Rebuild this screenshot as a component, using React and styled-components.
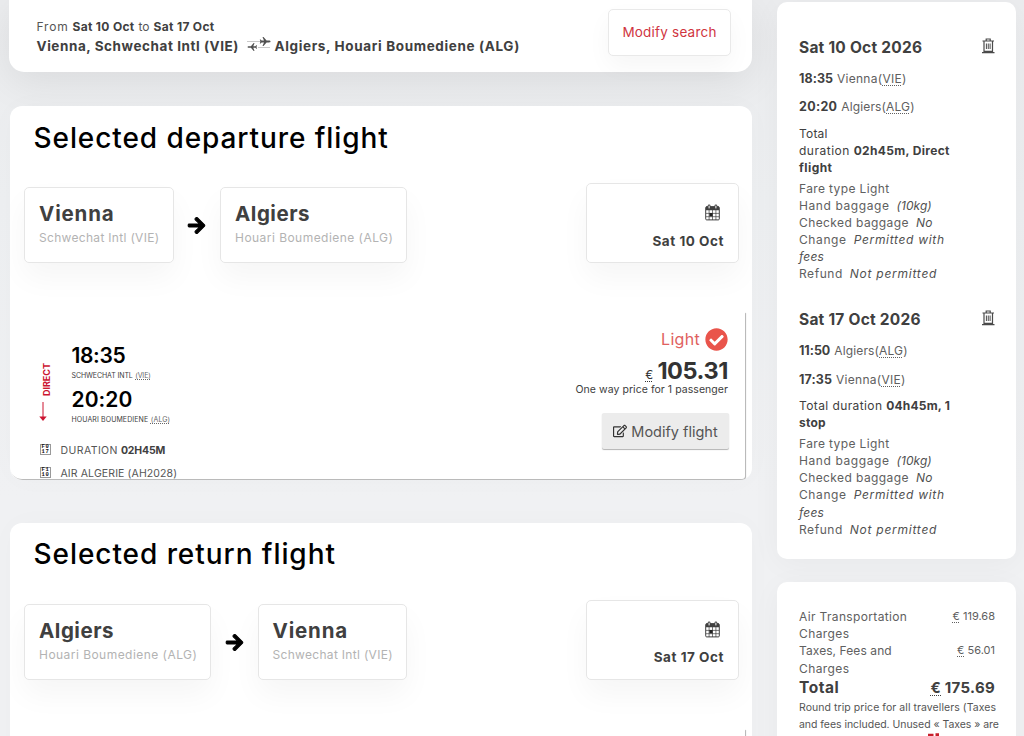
import React from 'react';
import styled, { createGlobalStyle } from 'styled-components';
import { FaArrowRight, FaCheckCircle, FaRegEdit } from 'react-icons/fa';

const GlobalStyle = createGlobalStyle`
	* {
		box-sizing: border-box;
	}
	body {
		margin: 0;
		height: 736px;
		overflow: hidden;
		background: linear-gradient(180deg, #ebecee 0, #edeff1 200px, #f0f1f3 500px);
		font-family: Inter, 'Liberation Sans', sans-serif;
		color: #404040;
	}
	abbr {
		text-decoration: underline dotted 1px;
		text-underline-offset: 2px;
	}
`;

const Page = styled.div`
	display: flex;
	height: 736px;
	overflow: hidden;
`;

const Main = styled.main`
	width: 742px;
	margin-left: 10px;
	flex: none;
`;

const SearchBar = styled.header`
	display: flex;
	justify-content: space-between;
	align-items: flex-start;
	height: 72px;
	margin-left: -1px;
	padding: 9px 21px 0 27.5px;
	background: #fff;
	border-radius: 0 0 15px 15px;
	box-shadow: 0 10px 40px rgba(0, 0, 0, 0.08);
`;

const SearchInfo = styled.div`
	padding-top: 9px;
`;

const Dates = styled.div`
	display: flex;
	gap: 4px;
	font-size: 12px;
	line-height: 18px;
	letter-spacing: 0.32px;
	white-space: nowrap;
	color: #555;
	b {
		color: #404040;
	}
`;

const Route = styled.div`
	display: flex;
	align-items: center;
	font-size: 13.5px;
	font-weight: 700;
	line-height: 20px;
	white-space: nowrap;
	svg {
		margin: -4px 3.5px 0 8px;
	}
`;

const Label = styled.span`
	letter-spacing: ${(props) => props.$ls || 0}px;
	white-space: nowrap;
`;

const SearchButton = styled.button`
	width: 123px;
	height: 47px;
	padding: 0 0 1px;
	border: 1px solid #e9e9e9;
	border-radius: 5px;
	background: #fff;
	box-shadow: 0 10px 25px rgba(0, 0, 0, 0.04);
	font: 400 13.5px Inter, sans-serif;
	letter-spacing: 0.21px;
	color: #d0353f;
`;

const FlightCard = styled.section`
	height: 374px;
	margin-top: ${(props) => props.$gap}px;
	background: #fff;
	border-radius: 12px;
	overflow: hidden;
	box-shadow: 0 0 30px rgba(0, 0, 0, 0.02);
`;

const Title = styled.h2`
	margin: 0;
	padding: 12.5px 0 0 23.5px;
	font-size: 28px;
	font-weight: 500;
	line-height: 39.5px;
	letter-spacing: ${(props) => props.$ls}px;
	color: #000;
`;

const Cities = styled.div`
	display: flex;
	align-items: flex-end;
	height: 80px;
	margin: 25px 13px 0 14px;
`;

const CityBox = styled.div`
	width: ${(props) => props.$width}px;
	height: 76px;
	padding: 13px 0 0 14px;
	border: 1px solid #e6e6e6;
	border-radius: 5px;
	background: #fff;
	box-shadow: 0 15px 30px rgba(0, 0, 0, 0.04);
`;

const CityName = styled.div`
	font-size: 20.5px;
	font-weight: 700;
	line-height: 25px;
	letter-spacing: ${(props) => props.$ls}px;
`;

const Airport = styled.div`
	font-size: 12px;
	line-height: 24px;
	letter-spacing: ${(props) => props.$ls}px;
	white-space: nowrap;
	color: #b3b3b3;
`;

const ArrowCell = styled.div`
	display: flex;
	align-items: center;
	justify-content: center;
	width: 46.5px;
	height: 76px;
	padding-top: 1px;
	color: #000;
	svg {
		stroke: #000;
		stroke-width: 28px;
		overflow: visible;
	}
`;

const DateBox = styled.div`
	display: flex;
	flex-direction: column;
	align-items: flex-end;
	width: 153px;
	height: 80px;
	margin-left: auto;
	padding: 20px 14px 0 0;
	border: 1px solid #e6e6e6;
	border-radius: 5px;
	background: #fff;
	box-shadow: 0 15px 30px rgba(0, 0, 0, 0.04);
	font-size: 13.5px;
	font-weight: 700;
	line-height: 20px;
	letter-spacing: 0.53px;
	svg {
		display: block;
		margin: 0 4px 9.5px 0;
	}
`;

const Flight = styled.div`
	display: flex;
	justify-content: space-between;
	width: 735px;
	height: 167px;
	margin-top: 49px;
	padding-right: 17px;
	border-radius: 0 0 3px 12px;
	box-shadow: 1px 1px 1px rgba(0, 0, 0, 0.3);
`;

const Itinerary = styled.div`
	padding: 31px 0 0 29px;
`;

const Schedule = styled.div`
	display: flex;
	margin-bottom: 8px;
`;

const Direct = styled.div`
	display: flex;
	flex-direction: column;
	align-items: center;
	width: 15px;
	margin-right: 17.5px;
	padding-top: 20px;
	color: #cc1430;
	span {
		align-self: flex-end;
		writing-mode: vertical-rl;
		transform: rotate(180deg);
		font-size: 9px;
		font-weight: 700;
		line-height: 14px;
	}
	svg {
		margin: 6px 7px 0 0;
	}
`;

const Time = styled.div`
	font-size: 21px;
	font-weight: 600;
	line-height: 25px;
	letter-spacing: ${(props) => props.$ls}px;
	color: #000;
`;

const Station = styled.div`
	display: flex;
	gap: ${(props) => props.$gap}px;
	font-size: 7px;
	line-height: 15px;
	margin-bottom: 4px;
	letter-spacing: ${(props) => props.$ls}px;
	white-space: nowrap;
	abbr {
		color: #666;
		text-underline-offset: 1px;
	}
`;

const Detail = styled.div`
	display: flex;
	align-items: center;
	height: 23px;
	margin-left: 1px;
	font-size: 10.5px;
	letter-spacing: ${(props) => props.$ls}px;
	color: #555;
	white-space: nowrap;
	b {
		margin-left: 3px;
		letter-spacing: -0.13px;
		color: #404040;
	}
`;

const CodeBox = styled.div`
	width: 11px;
	height: 11px;
	margin: -2px 9.5px 0 0;
	border: 1px solid #999;
	font: 700 5.5px/4.5px 'Liberation Mono', monospace;
	letter-spacing: 0.8px;
	text-align: center;
	white-space: pre;
	color: #111;
`;

const Price = styled.div`
	display: flex;
	flex-direction: column;
	align-items: flex-end;
	padding-top: 15px;
`;

const Fare = styled.div`
	display: flex;
	align-items: center;
	gap: 5px;
	height: 24px;
	font-size: 16px;
	letter-spacing: 0.3px;
	color: #e0605e;
	svg {
		color: #e9544b;
	}
`;

const Amount = styled.div`
	display: flex;
	align-items: center;
	height: 24px;
	margin-top: 8px;
	font-size: 23.5px;
	font-weight: 700;
	line-height: 24px;
	letter-spacing: -0.41px;
	color: #333;
	abbr {
		margin: 8px 4.5px 0 0;
		font-size: 12px;
		font-weight: 400;
		line-height: 14px;
	}
`;

const PriceNote = styled.div`
	font-size: 10.5px;
	line-height: 13px;
	letter-spacing: 0.05px;
`;

const ModifyButton = styled.button`
	display: flex;
	align-items: center;
	justify-content: center;
	gap: 4px;
	width: 127px;
	height: 36px;
	margin: 17px -1px 0 0;
	padding: 0;
	border: 0;
	border-radius: 2px;
	background: #ececec;
	box-shadow: 0 1px 1px rgba(0, 0, 0, 0.3);
	font: 400 14.5px Inter, sans-serif;
	color: #555;
	svg {
		color: #333;
	}
`;

const Sidebar = styled.aside`
	width: 239px;
	margin-left: 25px;
	padding-top: 2px;
`;

const SideCard = styled.section`
	height: ${(props) => props.$height}px;
	margin-bottom: 23px;
	padding: ${(props) => props.$top}px 21px 0 22px;
	background: #fff;
	border-radius: 10px;
	box-shadow: 0 5px 30px rgba(0, 0, 0, 0.04);
`;

const Leg = styled.div`
	margin-bottom: 24.8px;
`;

const LegTitle = styled.div`
	display: flex;
	justify-content: space-between;
	align-items: center;
	height: 24px;
	margin-bottom: 5px;
	font-size: 15.5px;
	font-weight: 700;
	letter-spacing: 0.23px;
	svg {
		margin-top: -2px;
	}
`;

const LegTime = styled.div`
	display: flex;
	gap: 4px;
	height: 28.5px;
	align-items: center;
	font-size: 12px;
	letter-spacing: ${(props) => props.$ls}px;
	color: #606060;
	b {
		font-size: 12.5px;
		letter-spacing: ${(props) => props.$bls}px;
		color: #404040;
	}
`;

const Duration = styled.div`
	margin: 3.6px 0 4px;
	font-size: 12px;
	line-height: 17px;
	white-space: nowrap;
`;

const Rule = styled.div`
	font-size: 12px;
	line-height: 17.15px;
	letter-spacing: ${(props) => props.$ls}px;
	white-space: nowrap;
	color: #606060;
	i {
		margin-left: ${(props) => (props.$wrap ? 0 : 7)}px;
		letter-spacing: ${(props) => props.$ils}px;
		color: #505050;
	}
`;

const Charge = styled.div`
	display: flex;
	justify-content: space-between;
	font-size: 12px;
	line-height: 17.2px;
	color: #606060;
`;

const ChargeValue = styled.span`
	font-size: 11px;
	white-space: nowrap;
`;

const Total = styled.div`
	display: flex;
	justify-content: space-between;
	font-size: 15.5px;
	font-weight: 700;
	line-height: 22.5px;
	letter-spacing: 0.5px;
	span {
		font-size: 15px;
		letter-spacing: 0.3px;
	}
`;

const Terms = styled.div`
	font-size: 10.5px;
	line-height: 17px;
	white-space: nowrap;
	color: #555;
	svg {
		display: block;
		margin: 0 0 0 129px;
	}
`;

const PlanesIcon = () => (
	<svg width='24' height='16' viewBox='0 0 24 16' fill='#505050'>
		<path d='M0 5.5h14M11 11.5h12' stroke='#bbb' strokeWidth='0.8' />
		<path d='M23.5 5.5c0-.7-.7-.9-1.5-.9h-2.4L16.5 1h-1l1.5 3.6h-2.4l-1-1.1h-.8l.6 2-.6 2h.8l1-1.1H17L15.5 10h1l3.1-3.6H22c.8 0 1.5-.2 1.5-.9z' />
		<path d='M.5 11c0 .5.6.7 1.3.7h2.1L6.7 15h.8l-1.2-3.3h2.1l.9 1h.7l-.5-1.7.5-1.7h-.7l-.9 1H6.3L7.5 7h-.8l-2.8 3.3H1.8c-.7 0-1.3.2-1.3.7z' />
	</svg>
);

const CalendarIcon = () => (
	<svg width='15' height='17' viewBox='0 0 15 17' fill='none' stroke='#404040'>
		<rect x='0.7' y='2.7' width='13.6' height='13.2' rx='1' />
		<path d='M1 2.5h13v3.8H1z' fill='#404040' stroke='none' />
		<path d='M1 9.4h13M1 12.7h13M4.1 6v10M7.5 6v10M10.9 6v10' strokeWidth='0.7' />
		<rect x='4.4' y='9' width='3.2' height='3.4' fill='#222' stroke='none' />
		<path d='M4.1 1.8v2.2M10.9 1.8v2.2' stroke='#404040' strokeWidth='2.8' strokeLinecap='round' />
		<path d='M4.1 2v2M10.9 2v2' stroke='#fff' strokeWidth='1' strokeLinecap='round' />
	</svg>
);

const TrashIcon = () => (
	<svg width='13' height='16' viewBox='0 0 13 16' fill='none' stroke='#4a4a4a'>
		<path d='M0.5 3h11.5M4.2 3V1h4v2M2 3v10.3h8.5V3M0 14.7h12.5' strokeWidth='1.2' />
		<path d='M4.4 5.5v5.5M6.25 5.5v5.5M8.1 5.5v5.5' strokeWidth='1' />
	</svg>
);

const DownArrow = () => (
	<svg width='8' height='20' viewBox='0 0 8 20'>
		<path d='M4 0v16' stroke='#cc1430' strokeWidth='1' />
		<path d='M0.3 14.5h7.4L4 19z' fill='#cc1430' />
	</svg>
);

const cities = {
	VIE: { name: 'Vienna', airport: 'Schwechat Intl (VIE)', width: 149.5, ls: 0.85, airportLs: 0.31 },
	ALG: { name: 'Algiers', airport: 'Houari Boumediene (ALG)', width: 187, ls: 0.52, airportLs: 0.46 },
};

const City = ({ code }) => {
	const city = cities[code];
	return (
		<CityBox $width={city.width}>
			<CityName $ls={city.ls}>{city.name}</CityName>
			<Airport $ls={city.airportLs}>{city.airport}</Airport>
		</CityBox>
	);
};

const CitiesRow = ({ from, to, date }) => (
	<Cities>
		<City code={from} />
		<ArrowCell>
			<FaArrowRight size={19} />
		</ArrowCell>
		<City code={to} />
		<DateBox>
			<CalendarIcon />
			{date}
		</DateBox>
	</Cities>
);

const legs = [
	{
		date: 'Sat 10 Oct 2026',
		times: [
			{ time: '18:35', city: 'Vienna', code: 'VIE', ls: 0.26, bls: 0.06 },
			{ time: '20:20', city: 'Algiers', code: 'ALG', ls: 0.14, bls: 0.3 },
		],
		duration: (
			<>
				<Label $ls={0.2}>Total</Label>
				<br />
				<Label $ls={0.5}>duration </Label>
				<b>
					<Label $ls={0.33}>02h45m, Direct</Label>
					<br />
					<Label $ls={0.45}>flight</Label>
				</b>
			</>
		),
	},
	{
		date: 'Sat 17 Oct 2026',
		times: [
			{ time: '11:50', city: 'Algiers', code: 'ALG', ls: 0.14, bls: -0.02 },
			{ time: '17:35', city: 'Vienna', code: 'VIE', ls: 0.26, bls: 0.12 },
		],
		duration: (
			<>
				<Label $ls={0.4}>Total duration </Label>
				<b>
					<Label $ls={0.2}>04h45m, 1</Label>
					<br />
					<Label $ls={0.2}>stop</Label>
				</b>
			</>
		),
	},
];

const rules = [
	{ name: 'Fare type Light', ls: 0.37 },
	{ name: 'Hand baggage', ls: 0.59, value: '(10kg)', ils: 0.05 },
	{ name: 'Checked baggage', ls: 0.41, value: 'No', ils: 0.3 },
	{ name: 'Change', ls: 0.6, value: 'Permitted with', ils: 0.68 },
	{ value: 'fees', ils: 0.2 },
	{ name: 'Refund', ls: 0.55, value: 'Not permitted', ils: 0.74 },
];

export default function App() {
	return (
		<Page>
			<GlobalStyle />
			<Main>
				<SearchBar>
					<SearchInfo>
						<Dates>
							<Label $ls={0.8}>From</Label>
							<b>Sat 10 Oct</b>
							<Label>to</Label>
							<b>Sat 17 Oct</b>
						</Dates>
						<Route>
							<Label $ls={0.56}>Vienna, Schwechat Intl (VIE)</Label>
							<PlanesIcon />
							<Label $ls={0.64}>Algiers, Houari Boumediene (ALG)</Label>
						</Route>
					</SearchInfo>
					<SearchButton>Modify search</SearchButton>
				</SearchBar>

				<FlightCard $gap={34}>
					<Title $ls={0.92}>Selected departure flight</Title>
					<CitiesRow from='VIE' to='ALG' date='Sat 10 Oct' />
					<Flight>
						<Itinerary>
							<Schedule>
								<Direct>
									<span>DIRECT</span>
									<DownArrow />
								</Direct>
								<div>
									<Time $ls={-0.35}>18:35</Time>
									<Station $gap={2.5} $ls={-0.1}>
										SCHWECHAT INTL <abbr>(VIE)</abbr>
									</Station>
									<Time $ls={0.08}>20:20</Time>
									<Station $gap={2.5} $ls={0.1}>
										HOUARI BOUMEDIENE <abbr>(ALG)</abbr>
									</Station>
								</div>
							</Schedule>
							<Detail $ls={0.42}>
								<CodeBox>{'F0\n17'}</CodeBox>
								DURATION <b>02H45M</b>
							</Detail>
							<Detail $ls={0.12}>
								<CodeBox>{'F1\n10'}</CodeBox>
								AIR ALGERIE (AH2028)
							</Detail>
						</Itinerary>
						<Price>
							<Fare>
								Light <FaCheckCircle size={23} />
							</Fare>
							<Amount>
								<abbr>€</abbr>105.31
							</Amount>
							<PriceNote>One way price for 1 passenger</PriceNote>
							<ModifyButton>
								<FaRegEdit size={14} />
								Modify flight
							</ModifyButton>
						</Price>
					</Flight>
				</FlightCard>

				<FlightCard $gap={42.5}>
					<Title $ls={0.94}>Selected return flight</Title>
					<CitiesRow from='ALG' to='VIE' date='Sat 17 Oct' />
					<Flight />
				</FlightCard>
			</Main>

			<Sidebar>
				<SideCard $height={557} $top={33}>
					{legs.map((leg) => (
						<Leg key={leg.date}>
							<LegTitle>
								{leg.date}
								<TrashIcon />
							</LegTitle>
							{leg.times.map((t) => (
								<LegTime key={t.time} $ls={t.ls} $bls={t.bls}>
									<b>{t.time}</b>
									<span>
										{t.city}(<abbr>{t.code}</abbr>)
									</span>
								</LegTime>
							))}
							<Duration>{leg.duration}</Duration>
							{rules.map((rule) => (
								<Rule key={rule.name || rule.value} $ls={rule.ls || 0} $ils={rule.ils || 0} $wrap={!rule.name}>
									{rule.name}
									{rule.value && <i>{rule.value}</i>}
								</Rule>
							))}
						</Leg>
					))}
				</SideCard>

				<SideCard $height={260} $top={26}>
					<Charge>
						<span>
							<Label $ls={0.35}>Air Transportation</Label>
							<br />
							<Label $ls={0.4}>Charges</Label>
						</span>
						<ChargeValue>
							<abbr>€</abbr> 119.68
						</ChargeValue>
					</Charge>
					<Charge>
						<span>
							<Label $ls={0.08}>Taxes, Fees and</Label>
							<br />
							<Label $ls={0.4}>Charges</Label>
						</span>
						<ChargeValue>
							<abbr>€</abbr> 56.01
						</ChargeValue>
					</Charge>
					<Total>
						Total
						<span>
							<abbr>€</abbr> 175.69
						</span>
					</Total>
					<Terms>
						<Label $ls={0.06}>Round trip price for all travellers (Taxes</Label>
						<br />
						<Label $ls={-0.04}>and fees included. Unused « Taxes » are</Label>
						<svg width='12' height='4' viewBox='0 0 12 4'>
							<path d='M0 0.8h5.5V4H0zM7.5 0.3H11V4H7.5z' fill='#c8202c' />
						</svg>
					</Terms>
				</SideCard>
			</Sidebar>
		</Page>
	);
}
